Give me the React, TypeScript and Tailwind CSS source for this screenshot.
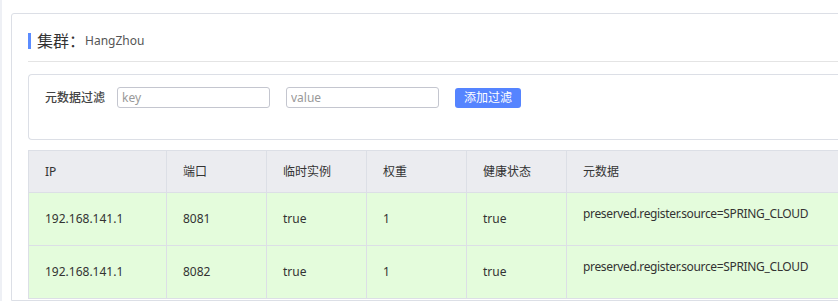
const cols = [
  { label: "IP", w: "w-[138px]" },
  { label: "端口", w: "w-[100px]" },
  { label: "临时实例", w: "w-[100px]" },
  { label: "权重", w: "w-[100px]" },
  { label: "健康状态", w: "w-[100px]" },
  { label: "元数据", w: "w-[300px]" },
];

const rows = [
  ["192.168.141.1", "8081", "true", "1", "true", "preserved.register.source=SPRING_CLOUD"],
  ["192.168.141.1", "8082", "true", "1", "true", "preserved.register.source=SPRING_CLOUD"],
];

export default function App() {
  return (
    <div
      className="flex h-[301px] w-[838px] overflow-hidden bg-white text-[#333]"
      style={{ fontFamily: '"Noto Sans", "Noto Sans CJK SC", sans-serif' }}
    >
      <div className="w-[2px] shrink-0 bg-[#eef0f5]" />
      <div className="ml-[9px] mt-[13px] w-[900px] shrink-0 rounded-tl-[3px] border border-[#dcdfe6] pl-[16px] pt-[19px]">
        <div className="flex h-[16px] items-center">
          <div className="h-[16px] w-[3px] bg-[#5b8cff]" />
          <span className="ml-[6px] text-[16px] leading-none text-[#333]">集群：</span>
          <span className="text-[12px] leading-none text-[#555]">HangZhou</span>
        </div>
        <div className="mt-[12px] h-px bg-[#e4e4e4]" />
        <div className="mt-[12px] h-[66px] rounded-tl-[4px] rounded-bl-[4px] border border-r-0 border-[#dcdfe6] pt-[12px]">
          <div className="flex h-[21px] items-center">
            <span className="ml-[16px] w-[72px] text-[12px] font-medium text-[#444]">元数据过滤</span>
            <input
              readOnly
              placeholder="key"
              className="h-[21px] w-[153px] rounded-[3px] border border-[#c4c6cf] px-[4px] text-[12px] outline-none placeholder:text-[#999]"
            />
            <input
              readOnly
              placeholder="value"
              className="ml-[16px] h-[21px] w-[153px] rounded-[3px] border border-[#c4c6cf] px-[4px] text-[12px] outline-none placeholder:text-[#999]"
            />
            <button className="ml-[16px] h-[20px] w-[66px] rounded-[3px] bg-[#5584ff] text-[12px] leading-none text-white">
              添加过滤
            </button>
          </div>
        </div>
        <div className="mt-[10px] border-l border-t border-[#dcdfe6]">
          <div className="flex h-[42px] bg-[#ebecf0]">
            {cols.map((c, i) => (
              <div
                key={c.label}
                className={`${c.w} flex shrink-0 items-center border-b border-[#dcdfe6] pl-[16px] text-[12px] ${
                  i < cols.length - 1 ? "border-r" : ""
                }`}
              >
                {c.label}
              </div>
            ))}
          </div>
          {rows.map((r, ri) => (
            <div key={ri} className="flex h-[53px] bg-[#e4fcdc]">
              {r.map((v, i) => (
                <div
                  key={i}
                  className={`${cols[i].w} flex shrink-0 border-b border-[#dcdfe6] pl-[16px] text-[12px] ${
                    i === r.length - 1 ? "items-start pt-[12px] tracking-[-0.35px]" : "items-center border-r"
                  }`}
                >
                  {v}
                </div>
              ))}
            </div>
          ))}
        </div>
      </div>
    </div>
  );
}
